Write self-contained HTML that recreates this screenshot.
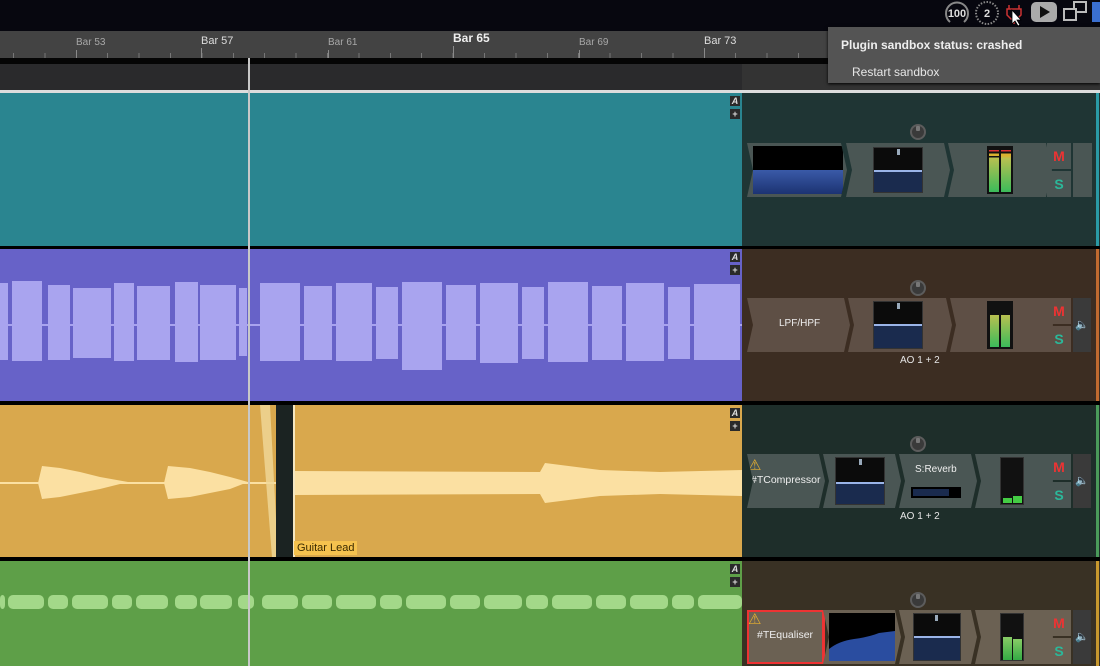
<!DOCTYPE html>
<html><head><meta charset="utf-8"><style>
*{margin:0;padding:0;box-sizing:border-box}
body{width:1100px;height:666px;overflow:hidden;background:#07070f;font-family:"Liberation Sans",sans-serif;position:relative}
.abs{position:absolute}
.lbl{position:absolute;top:37px;font-size:10px;color:#a8a8a8}
.tk{position:absolute;width:1px;background:#8a8a8a}
.ab{position:absolute;left:730px;width:10px;height:10px;background:#2a2a2a;color:#ddd;font-size:9px;font-weight:bold;text-align:center;line-height:10px}
.strip{position:absolute;left:747px;height:54px;width:345px}
.slot{position:absolute;top:0;height:54px;background:#4a5654;clip-path:polygon(0 0,calc(100% - 6px) 0,100% 50%,calc(100% - 6px) 100%,0 100%,6px 50%)}
.ms{position:absolute;width:24px;height:26px;background:#4a5654;font-weight:bold;font-size:14px;text-align:center;line-height:26px}
.knob{position:absolute;width:16px;height:16px;border-radius:50%;border:2px solid #5c5c5c;background:#3a3a3a}
.knob::after{content:"";position:absolute;left:4px;top:0;width:4px;height:5px;background:#777;border-radius:1px}
.ao{position:absolute;left:900px;font-size:10px;color:#e6e6e6}
.txt{position:absolute;color:#eee;font-size:10px}
</style></head><body>
<!-- ruler -->
<div class="abs" style="left:0;top:31px;width:1100px;height:27px;background:#434343"></div>
<div class="abs" style="left:13px;top:53px;width:830px;height:5px;background:repeating-linear-gradient(90deg,#777 0 1px,transparent 1px 31.4px)"></div>
<div class="lbl" style="left:76px">Bar 53</div>
<div class="lbl" style="left:201px;top:35px;color:#ddd;font-size:11px">Bar 57</div>
<div class="lbl" style="left:328px">Bar 61</div>
<div class="lbl" style="left:453px;top:31px;color:#eee;font-size:12px;font-weight:bold">Bar 65</div>
<div class="lbl" style="left:579px">Bar 69</div>
<div class="lbl" style="left:704px;top:35px;color:#ddd;font-size:11px">Bar 73</div>
<div class="tk" style="left:76px;top:50px;height:8px"></div>
<div class="tk" style="left:201px;top:48px;height:10px"></div>
<div class="tk" style="left:328px;top:50px;height:8px"></div>
<div class="tk" style="left:453px;top:46px;height:12px"></div>
<div class="tk" style="left:579px;top:50px;height:8px"></div>
<div class="tk" style="left:704px;top:48px;height:10px"></div>
<div class="abs" style="left:0;top:58px;width:1100px;height:6px;background:#050505"></div>
<div class="abs" style="left:0;top:64px;width:742px;height:26px;background:#2a2a2c"></div>
<div class="abs" style="left:742px;top:64px;width:358px;height:26px;background:#333"></div>
<div class="abs" style="left:0;top:90px;width:1100px;height:3px;background:#ddd"></div>
<!-- tracks -->
<div class="abs" style="left:0;top:93px;width:742px;height:153px;background:#2a8590"></div>
<div class="abs" style="left:0;top:246px;width:1100px;height:3px;background:#000"></div>
<div class="abs" style="left:0;top:249px;width:742px;height:152px;background:#6762c8"></div>
<div class="abs" style="left:0;top:401px;width:1100px;height:4px;background:#000"></div>
<div class="abs" style="left:0;top:405px;width:742px;height:152px;background:#d9a84d"></div>
<div class="abs" style="left:0;top:557px;width:1100px;height:4px;background:#000"></div>
<div class="abs" style="left:0;top:561px;width:742px;height:105px;background:#5e9f48"></div>
<!-- right panel bgs -->
<div class="abs" style="left:742px;top:93px;width:358px;height:153px;background:#1f3534"></div>
<div class="abs" style="left:742px;top:249px;width:358px;height:152px;background:#3c2d22"></div>
<div class="abs" style="left:742px;top:405px;width:358px;height:152px;background:#1e2e2a"></div>
<div class="abs" style="left:742px;top:561px;width:358px;height:105px;background:#393124"></div>
<div class="abs" style="left:1096px;top:93px;width:3px;height:153px;background:#2a9aa6"></div>
<div class="abs" style="left:1096px;top:249px;width:3px;height:152px;background:#c06a30"></div>
<div class="abs" style="left:1096px;top:405px;width:3px;height:152px;background:#4a9a5a"></div>
<div class="abs" style="left:1096px;top:561px;width:3px;height:105px;background:#c8982e"></div>
<!-- waveforms -->
<svg class="abs" style="left:0;top:0" width="742" height="666">
<g fill="#a9a4ef">
<rect x="0" y="283" width="8" height="77"/><rect x="12" y="281" width="30" height="80"/>
<rect x="48" y="285" width="22" height="75"/><rect x="73" y="288" width="38" height="70"/>
<rect x="114" y="283" width="20" height="78"/><rect x="137" y="286" width="33" height="74"/>
<rect x="175" y="282" width="23" height="80"/><rect x="200" y="285" width="36" height="75"/>
<rect x="239" y="288" width="8" height="68"/><rect x="260" y="283" width="40" height="78"/>
<rect x="304" y="286" width="28" height="74"/><rect x="336" y="283" width="36" height="78"/>
<rect x="376" y="287" width="22" height="72"/><rect x="402" y="282" width="40" height="88"/>
<rect x="446" y="285" width="30" height="75"/><rect x="480" y="283" width="38" height="80"/>
<rect x="522" y="287" width="22" height="72"/><rect x="548" y="282" width="40" height="80"/>
<rect x="592" y="286" width="30" height="74"/><rect x="626" y="283" width="38" height="78"/>
<rect x="668" y="287" width="22" height="72"/><rect x="694" y="284" width="46" height="76"/>
<rect x="0" y="324" width="742" height="2"/>
</g>
<g fill="#fbe0a2">
<rect x="0" y="482" width="742" height="2"/>
<path d="M38 483 L42 466 L60 468 L80 472 L100 477 L128 482 L100 489 L80 493 L60 497 L42 499 Z"/>
<path d="M164 483 L168 466 L190 468 L210 472 L230 477 L248 482 L230 489 L210 493 L190 497 L168 499 Z"/>
<path d="M294 471 L540 472 L545 463 L600 470 L660 472 L742 470 L742 496 L660 494 L600 496 L545 503 L540 494 L294 495 Z"/>
</g>
<polygon points="260,405 270,405 278,557 272,557" fill="#f0d89a" opacity=".8"/>
<rect x="276" y="405" width="17" height="152" fill="#1b2322"/>
<rect x="293" y="405" width="2" height="152" fill="#f5e6c0"/>
<g fill="#a3d889">
<rect x="0" y="595" width="5" height="14" rx="4"/><rect x="8" y="595" width="36" height="14" rx="5"/>
<rect x="48" y="595" width="20" height="14" rx="5"/><rect x="72" y="595" width="36" height="14" rx="5"/>
<rect x="112" y="595" width="20" height="14" rx="5"/><rect x="136" y="595" width="32" height="14" rx="5"/>
<rect x="175" y="595" width="22" height="14" rx="5"/><rect x="200" y="595" width="32" height="14" rx="5"/>
<rect x="238" y="595" width="16" height="14" rx="5"/><rect x="262" y="595" width="36" height="14" rx="5"/>
<rect x="302" y="595" width="30" height="14" rx="5"/><rect x="336" y="595" width="40" height="14" rx="5"/>
<rect x="380" y="595" width="22" height="14" rx="5"/><rect x="406" y="595" width="40" height="14" rx="5"/>
<rect x="450" y="595" width="30" height="14" rx="5"/><rect x="484" y="595" width="38" height="14" rx="5"/>
<rect x="526" y="595" width="22" height="14" rx="5"/><rect x="552" y="595" width="40" height="14" rx="5"/>
<rect x="596" y="595" width="30" height="14" rx="5"/><rect x="630" y="595" width="38" height="14" rx="5"/>
<rect x="672" y="595" width="22" height="14" rx="5"/><rect x="698" y="595" width="44" height="14" rx="5"/>
</g>
</svg>
<div class="abs" style="left:294px;top:541px;background:#f5c24e;color:#3a2a00;font-size:11px;padding:1px 3px">Guitar Lead</div>
<div class="abs" style="left:248px;top:58px;width:2px;height:608px;background:#c8c8c8"></div>
<!-- A + -->
<div class="ab" style="top:96px;font-style:italic">A</div><div class="ab" style="top:109px">+</div>
<div class="ab" style="top:252px;font-style:italic">A</div><div class="ab" style="top:265px">+</div>
<div class="ab" style="top:408px;font-style:italic">A</div><div class="ab" style="top:421px">+</div>
<div class="ab" style="top:564px;font-style:italic">A</div><div class="ab" style="top:577px">+</div>
<!-- knobs -->
<div class="knob" style="left:910px;top:124px"></div>
<div class="knob" style="left:910px;top:280px"></div>
<div class="knob" style="left:910px;top:436px"></div>
<div class="knob" style="left:910px;top:592px"></div>
<!-- strip 1 -->
<div class="strip" style="top:143px">
 <div class="slot" style="left:0;width:100px"><div class="abs" style="left:6px;top:3px;width:90px;height:48px;background:#000"><div class="abs" style="left:0;top:24px;width:90px;height:24px;background:linear-gradient(#3a5aa8,#1c3372)"></div></div></div>
 <div class="slot" style="left:99px;width:104px"><div class="abs" style="left:27px;top:4px;width:50px;height:46px;background:#0b0b0b;border:1px solid #333"><div class="abs" style="left:23px;top:1px;width:3px;height:6px;background:#9ab"></div><div class="abs" style="left:0;top:22px;width:48px;height:22px;background:#1a2b4e;border-top:2px solid #9ab4e8"></div></div></div>
 <div class="slot" style="left:201px;width:104px"><div class="abs" style="left:39px;top:3px;width:26px;height:48px;background:#111"><div class="abs" style="left:2px;top:4px;width:10px;height:42px;background:linear-gradient(#d33 0 4%,#111 4% 8%,#d9b030 8% 14%,#111 14% 18%,#b8c050 18%,#3bbb5a)"></div><div class="abs" style="left:14px;top:4px;width:10px;height:42px;background:linear-gradient(#d33 0 4%,#111 4% 8%,#d9b030 8% 14%,#b8c050 20%,#3bbb5a)"></div></div></div>
 <div class="ms" style="left:300px;top:0;color:#e33">M</div><div class="ms" style="left:300px;top:28px;color:#2bb89a">S</div>
 <div class="abs" style="left:326px;top:0;width:19px;height:54px;background:#4a5654"></div>
</div>
<!-- strip 2 -->
<div class="strip" style="top:298px">
 <div class="slot" style="left:0;width:103px;background:#5e4f45"><div class="txt" style="left:32px;top:20px">LPF/HPF</div></div>
 <div class="slot" style="left:101px;width:104px;background:#5e4f45"><div class="abs" style="left:25px;top:3px;width:50px;height:48px;background:#0b0b0b;border:1px solid #333"><div class="abs" style="left:23px;top:1px;width:3px;height:6px;background:#9ab"></div><div class="abs" style="left:0;top:22px;width:48px;height:24px;background:#1a2b4e;border-top:2px solid #9ab4e8"></div></div></div>
 <div class="slot" style="left:203px;width:103px;background:#5e4f45"><div class="abs" style="left:37px;top:3px;width:26px;height:48px;background:#111"><div class="abs" style="left:3px;top:14px;width:9px;height:32px;background:linear-gradient(#b8c050,#3bbb5a)"></div><div class="abs" style="left:14px;top:14px;width:9px;height:32px;background:linear-gradient(#b8c050,#3bbb5a)"></div></div></div>
 <div class="ms" style="left:300px;top:0;color:#e33;background:#5e4f45">M</div><div class="ms" style="left:300px;top:28px;color:#2bb89a;background:#5e4f45">S</div>
 <div class="abs" style="left:326px;top:0;width:18px;height:54px;background:#3a3a3a;color:#ccc;font-size:11px;text-align:center;line-height:54px">🔈</div>
</div>
<div class="ao" style="top:355px">AO 1 + 2</div>
<!-- strip 3 -->
<div class="strip" style="top:454px">
 <div class="slot" style="left:0;width:78px"><div class="abs" style="left:1px;top:2px;color:#e8b030;font-size:15px">⚠</div><div class="txt" style="left:4px;top:20px;font-size:10.5px">#TCompressor</div></div>
 <div class="slot" style="left:76px;width:78px"><div class="abs" style="left:12px;top:3px;width:50px;height:48px;background:#0b0b0b;border:1px solid #333"><div class="abs" style="left:23px;top:1px;width:3px;height:6px;background:#9ab"></div><div class="abs" style="left:0;top:24px;width:48px;height:22px;background:#1a2b4e;border-top:2px solid #9ab4e8"></div></div></div>
 <div class="slot" style="left:152px;width:78px"><div class="txt" style="left:16px;top:10px">S:Reverb</div><div class="abs" style="left:12px;top:33px;width:50px;height:11px;background:#000"><div class="abs" style="left:2px;top:2px;width:36px;height:7px;background:#1a2b4e"></div></div></div>
 <div class="slot" style="left:228px;width:78px"><div class="abs" style="left:25px;top:3px;width:24px;height:48px;background:#111;border:1px solid #333"><div class="abs" style="left:2px;top:40px;width:9px;height:5px;background:#4c4"></div><div class="abs" style="left:12px;top:38px;width:9px;height:7px;background:#4c4"></div></div></div>
 <div class="ms" style="left:300px;top:0;color:#e33">M</div><div class="ms" style="left:300px;top:28px;color:#2bb89a">S</div>
 <div class="abs" style="left:326px;top:0;width:18px;height:54px;background:#3a3a3a;color:#ccc;font-size:11px;text-align:center;line-height:54px">🔈</div>
</div>
<div class="ao" style="top:511px">AO 1 + 2</div>
<!-- strip 4 -->
<div class="strip" style="top:610px">
 <div class="slot" style="left:0;width:78px;background:#e33;clip-path:none;"><div class="abs" style="left:2px;top:2px;width:73px;height:50px;background:#6b6153"></div><div class="abs" style="left:1px;top:0;color:#e8b030;font-size:15px">⚠</div><div class="txt" style="left:10px;top:19px;font-size:10.5px">#TEqualiser</div></div>
 <div class="slot" style="left:76px;width:78px;background:#6b6153"><div class="abs" style="left:6px;top:3px;width:66px;height:48px;background:#000"><svg width="66" height="48"><path d="M0 48 L0 36 Q10 28 25 26 T50 20 L66 18 L66 48 Z" fill="#2a4da0"/></svg></div></div>
 <div class="slot" style="left:152px;width:78px;background:#6b6153"><div class="abs" style="left:14px;top:3px;width:48px;height:48px;background:#0b0b0b;border:1px solid #333"><div class="abs" style="left:21px;top:1px;width:3px;height:6px;background:#9ab"></div><div class="abs" style="left:0;top:22px;width:46px;height:24px;background:#1a2b4e;border-top:2px solid #9ab4e8"></div></div></div>
 <div class="slot" style="left:228px;width:78px;background:#6b6153"><div class="abs" style="left:25px;top:3px;width:24px;height:48px;background:#111;border:1px solid #333"><div class="abs" style="left:2px;top:23px;width:9px;height:23px;background:linear-gradient(#8c6,#3a4)"></div><div class="abs" style="left:12px;top:25px;width:9px;height:21px;background:linear-gradient(#8c6,#3a4)"></div></div></div>
 <div class="ms" style="left:300px;top:0;color:#e33;background:#6b6153">M</div><div class="ms" style="left:300px;top:28px;color:#2bb89a;background:#6b6153">S</div>
 <div class="abs" style="left:326px;top:0;width:18px;height:54px;background:#3a3a3a;color:#ccc;font-size:11px;text-align:center;line-height:54px">🔈</div>
</div>
<!-- top icons -->
<svg class="abs" style="left:940px;top:0" width="160" height="28">
 <path d="M10 22 A11 11 0 1 1 24 22" fill="none" stroke="#888" stroke-width="2"/>
 <text x="17" y="17" font-size="11" font-weight="bold" fill="#ddd" text-anchor="middle" font-family="Liberation Sans">100</text>
 <circle cx="47" cy="13" r="11" fill="none" stroke="#888" stroke-width="2" stroke-dasharray="1.5 1.5"/>
 <text x="47" y="17" font-size="11" font-weight="bold" fill="#ddd" text-anchor="middle" font-family="Liberation Sans">2</text>
 <path d="M69 5 v4 M79 5 v4 M67 9 h14 v6 l-4 4 h-6 l-4 -4 z M74 19 v5" fill="none" stroke="#c33" stroke-width="1.5"/>
 <path d="M72 10 l0 14 l3 -3 l3 5 l2 -1 l-3 -5 l4 0 z" fill="#fff" stroke="#000" stroke-width=".8"/>
 <rect x="91" y="2" width="26" height="20" rx="5" fill="#aaa"/><path d="M100 6 l10 6 l-10 6 z" fill="#111"/>
 <rect x="134" y="2" width="12" height="10" fill="none" stroke="#bbb" stroke-width="2"/><rect x="124" y="9" width="12" height="11" fill="#07070f" stroke="#bbb" stroke-width="2"/>
 <rect x="152" y="2" width="8" height="20" fill="#3a6fd0"/>
</svg>
<!-- popup -->
<div class="abs" style="left:828px;top:27px;width:272px;height:56px;background:#545454;box-shadow:0 1px 3px #000">
 <div class="abs" style="left:13px;top:11px;color:#eee;font-size:12px;font-weight:bold">Plugin sandbox status: crashed</div>
 <div class="abs" style="left:24px;top:38px;color:#e6e6e6;font-size:12px">Restart sandbox</div>
</div>
</body></html>
